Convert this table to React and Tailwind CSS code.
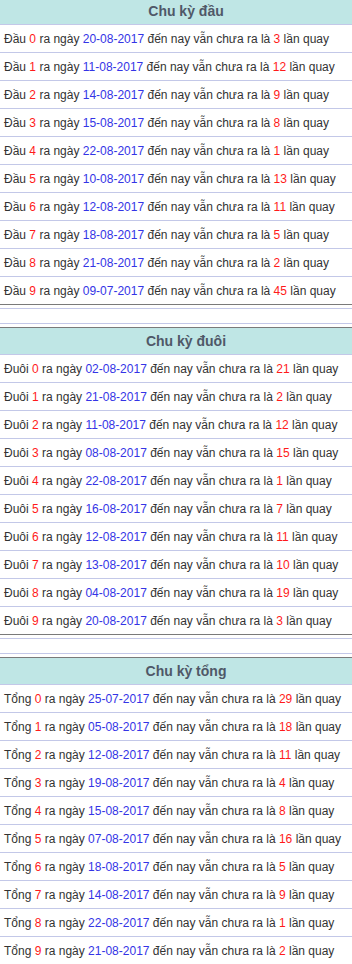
import React from "react";

const sections = [
  {
    title: "Chu kỳ đầu",
    label: "Đầu",
    rows: [
      ["0", "20-08-2017", "3"],
      ["1", "11-08-2017", "12"],
      ["2", "14-08-2017", "9"],
      ["3", "15-08-2017", "8"],
      ["4", "22-08-2017", "1"],
      ["5", "10-08-2017", "13"],
      ["6", "12-08-2017", "11"],
      ["7", "18-08-2017", "5"],
      ["8", "21-08-2017", "2"],
      ["9", "09-07-2017", "45"],
    ],
  },
  {
    title: "Chu kỳ đuôi",
    label: "Đuôi",
    rows: [
      ["0", "02-08-2017", "21"],
      ["1", "21-08-2017", "2"],
      ["2", "11-08-2017", "12"],
      ["3", "08-08-2017", "15"],
      ["4", "22-08-2017", "1"],
      ["5", "16-08-2017", "7"],
      ["6", "12-08-2017", "11"],
      ["7", "13-08-2017", "10"],
      ["8", "04-08-2017", "19"],
      ["9", "20-08-2017", "3"],
    ],
  },
  {
    title: "Chu kỳ tổng",
    label: "Tổng",
    rows: [
      ["0", "25-07-2017", "29"],
      ["1", "05-08-2017", "18"],
      ["2", "12-08-2017", "11"],
      ["3", "19-08-2017", "4"],
      ["4", "15-08-2017", "8"],
      ["5", "07-08-2017", "16"],
      ["6", "18-08-2017", "5"],
      ["7", "14-08-2017", "9"],
      ["8", "22-08-2017", "1"],
      ["9", "21-08-2017", "2"],
    ],
  },
];

function Section({ s }) {
  return (
    <div className="border-t border-[#7a7a7a]">
      <div className="h-[27px] bg-[#bfe6e5] border-b border-[#c3c8e8] flex items-center justify-center text-[14px] font-bold text-[#4f5868]">
        {s.title}
      </div>
      {s.rows.map((r, i) => (
        <div
          key={i}
          className={
            "h-[28px] flex items-center pl-[4px] text-[12px] text-[#333] whitespace-nowrap border-b " +
            (i === s.rows.length - 1 ? "border-[#7a7a7a]" : "border-[#c3c8e8]")
          }
        >
          <span>{s.label}&nbsp;</span>
          <span className="text-[#ff1a1a]">{r[0]}</span>
          <span>&nbsp;ra ngày&nbsp;</span>
          <span className="text-[#3434e6]">{r[1]}</span>
          <span>&nbsp;đến nay vẫn chưa ra là&nbsp;</span>
          <span className="text-[#ff1a1a]">{r[2]}</span>
          <span>&nbsp;lần quay</span>
        </div>
      ))}
    </div>
  );
}

export default function App() {
  return (
    <div
      className="w-[352px] h-[964px] overflow-hidden bg-white"
      style={{ fontFamily: '"Liberation Sans", Arial, sans-serif' }}
    >
      <div className="w-[372px] -mt-[3px]">
        {sections.map((s, i) => (
          <React.Fragment key={i}>
            <Section s={s} />
            {i < sections.length - 1 && (
              <div className="mt-[3px] mb-[3px] h-[16px] border-t border-b border-[#c3c8e8]" />
            )}
          </React.Fragment>
        ))}
      </div>
    </div>
  );
}
